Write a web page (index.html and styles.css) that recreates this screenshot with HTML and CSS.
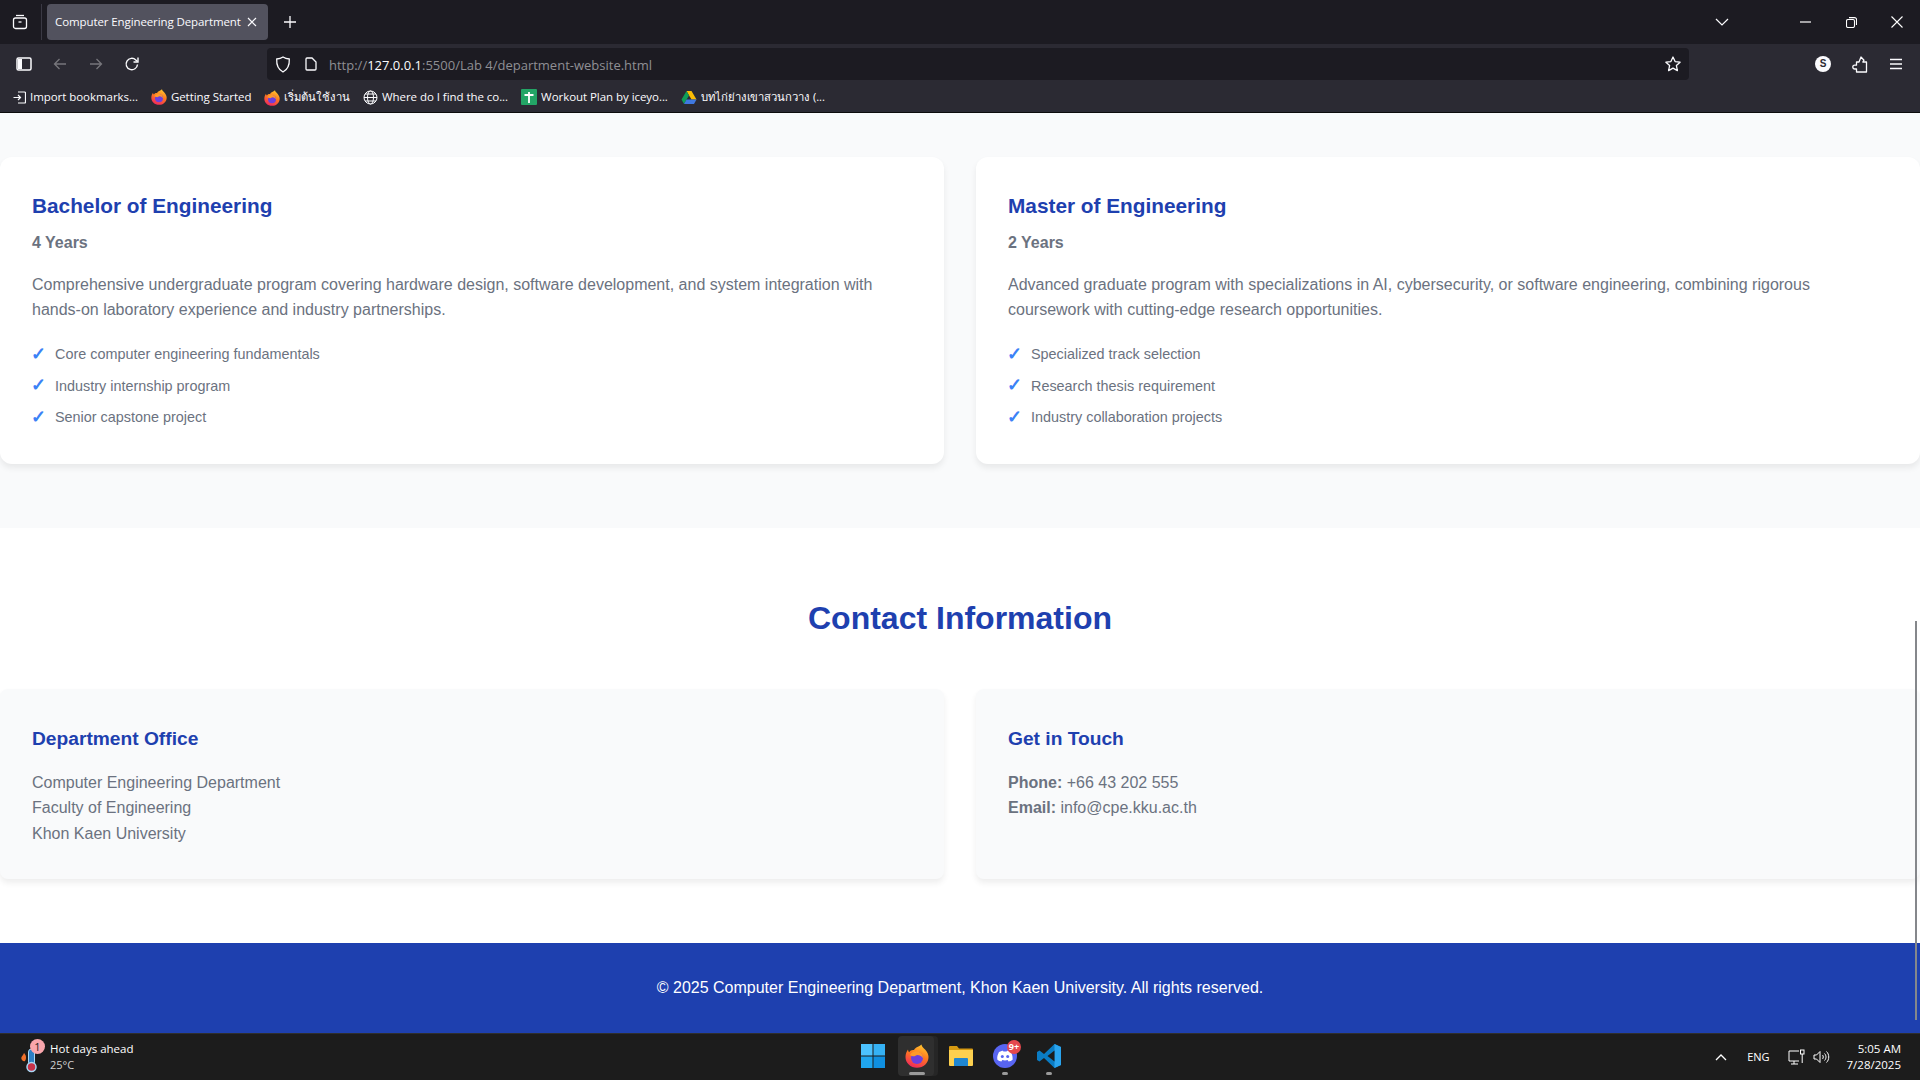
FILE: index.html
```html
<!DOCTYPE html>
<html>
<head>
  <title>Computer Engineering Department</title>
  <meta charset="utf-8" />
  <link rel="stylesheet" href="styles.css">
</head>
<body>
  <svg class="defs" width="0" height="0">
    <defs>
      <linearGradient id="fxg" x1="0.7" y1="0" x2="0.3" y2="1">
        <stop offset="0" stop-color="#ffc62e" />
        <stop offset="0.45" stop-color="#ff7a1f" />
        <stop offset="1" stop-color="#f0245f" />
      </linearGradient>
      <symbol id="fx" viewBox="0 0 24 24">
        <path d="M16.500 .5c.2 2.500 2 3.200 3.800 5.200C22.300 8 23.500 10.500 23.500 13c0 6-5 10.800-11.500 10.800S.5 18.800.5 13c0-2.800.9-5.300 2.500-7.500.1 1.300.5 2.200 1.200 2.800C5.200 6.400 7 5.600 9 6c1.500-3 5-3 7.500-5.500z" fill="url(#fxg)" />
        <circle cx="12" cy="14" r="6" fill="#6e3fdc" />
        <path d="M5 11c1.500-3 4.500-4.200 7.500-3.600 3.400.7 5.500 3.400 5.500 6.600 0 .5-1.700-3-5.500-3-1.500 0-1.700 1.200-3.200 1.200S5.600 12 5 11z" fill="#ff9a2a" />
      </symbol>
    </defs>
  </svg>

  <div class="browser-top">
    <div class="tabbar">
      <div class="tab-manager">
        <svg width="16" height="16" viewBox="0 0 16 16" fill="none" stroke="#fbfbfe" stroke-width="1.300"><rect x="1.500" y="4" width="13" height="10.500" rx="2" /><path d="M4 1.500h8" /><path d="M6.500 8h3" /></svg>
      </div>
      <div class="tab">
        <span class="tab-title">Computer Engineering Department</span>
        <svg width="10" height="10" viewBox="0 0 10 10" stroke="#fbfbfe" stroke-width="1.200"><path d="M1 1l8 8M9 1l-8 8" /></svg>
      </div>
      <div class="new-tab">
        <svg width="12" height="12" viewBox="0 0 12 12" stroke="#fbfbfe" stroke-width="1.300"><path d="M6 0v12M0 6h12" /></svg>
      </div>
      <div class="spacer"></div>
      <svg class="tab-list" width="14" height="8" viewBox="0 0 14 8" fill="none" stroke="#fbfbfe" stroke-width="1.200"><path d="M1 1l6 6 6-6" /></svg>
      <div class="win-btn">
        <svg width="11" height="2" viewBox="0 0 11 2" stroke="#fff" stroke-width="1.200"><path d="M0 1h11" /></svg>
      </div>
      <div class="win-btn">
        <svg width="11" height="11" viewBox="0 0 11 11" fill="none" stroke="#fff" stroke-width="1.100"><rect x="0.500" y="2.500" width="8" height="8" rx="1.500" /><path d="M3 .6h5.500a2 2 0 0 1 2 2V8" /></svg>
      </div>
      <div class="win-btn">
        <svg width="12" height="12" viewBox="0 0 12 12" stroke="#fff" stroke-width="1.100"><path d="M.5.500l11 11M11.500.500l-11 11" /></svg>
      </div>
    </div>

    <div class="navbar">
      <div class="nav-btn">
        <svg width="16" height="14" viewBox="0 0 16 14" fill="none" stroke="#fbfbfe" stroke-width="1.500"><rect x="1" y="1" width="14" height="12" rx="1.500" /><rect x="2" y="2" width="4" height="10" fill="#fbfbfe" stroke="none" /></svg>
      </div>
      <div class="nav-btn">
        <svg width="14" height="14" viewBox="0 0 14 14" fill="none" stroke="#77767c" stroke-width="1.300"><path d="M13 7H1.500M6.500 2l-5 5 5 5" /></svg>
      </div>
      <div class="nav-btn">
        <svg width="14" height="14" viewBox="0 0 14 14" fill="none" stroke="#77767c" stroke-width="1.300"><path d="M1 7h11.500M7.500 2l5 5-5 5" /></svg>
      </div>
      <div class="nav-btn">
        <svg width="16" height="16" viewBox="0 0 16 16" fill="none" stroke="#fbfbfe" stroke-width="1.400"><path d="M13.500 8.500a5.700 5.700 0 1 1-1.700-4.600l1.700 1.700" /><path d="M14 1.500v4.500H9.500" /></svg>
      </div>
      <div class="urlbar">
        <svg class="shield" width="16" height="17" viewBox="0 0 16 17" fill="none" stroke="#fbfbfe" stroke-width="1.300"><path d="M8 1c2 1.300 4 1.800 6.300 2 .3 6-1.500 10.500-6.300 13C3.200 13.500 1.400 9 1.700 3 4 2.800 6 2.300 8 1z" /></svg>
        <svg class="page-icon" width="12" height="14" viewBox="0 0 12 14" fill="none" stroke="#fbfbfe" stroke-width="1.300"><path d="M1 2a1 1 0 0 1 1-1h5l4 4v7a1 1 0 0 1-1 1H2a1 1 0 0 1-1-1z" /></svg>
        <span class="url"><span class="url-dim">http://</span>127.0.0.1<span class="url-dim">:5500/Lab 4/department-website.html</span></span>
        <div class="spacer"></div>
        <svg class="star" width="16" height="16" viewBox="0 0 16 16" fill="none" stroke="#fbfbfe" stroke-width="1.300" stroke-linejoin="round"><path d="M8 1l2.100 4.600 5 .6-3.700 3.400 1 5L8 12.100l-4.400 2.500 1-5L.9 6.200l5-.6z" /></svg>
      </div>
      <div class="nav-right">
        <div class="avatar">S</div>
        <svg width="16" height="17" viewBox="0 0 16 17" fill="none" stroke="#fbfbfe" stroke-width="1.300" stroke-linejoin="round"><path d="M9 1l3 3.200-1.200 1.800h3.700v10H4.500v-3H2.700a1.900 1.900 0 0 1 0-3.800h1.800V6H7z" /></svg>
        <svg width="14" height="12" viewBox="0 0 14 12" stroke="#fbfbfe" stroke-width="1.300"><path d="M1 1.500h12M1 6h12M1 10.500h12" /></svg>
      </div>
    </div>

    <div class="bookmarks">
      <div class="bookmark">
        <svg width="13" height="13" viewBox="0 0 13 13" fill="none" stroke="#fbfbfe" stroke-width="1.200"><path d="M5 1h6.500a1 1 0 0 1 1 1v9a1 1 0 0 1-1 1H5M.5 6.500h7M5 4l2.500 2.500L5 9" /></svg>
        <span>Import bookmarks...</span>
      </div>
      <div class="bookmark">
        <svg width="16" height="16"><use href="#fx" /></svg>
        <span>Getting Started</span>
      </div>
      <div class="bookmark">
        <svg width="16" height="16"><use href="#fx" /></svg>
        <span class="thai">เริ่มต้นใช้งาน</span>
      </div>
      <div class="bookmark">
        <svg width="15" height="15" viewBox="0 0 15 15" fill="none" stroke="#fbfbfe" stroke-width="1"><circle cx="7.500" cy="7.500" r="6.500" /><ellipse cx="7.500" cy="7.500" rx="3" ry="6.500" /><path d="M1 7.500h13M2 4h11M2 11h11" /></svg>
        <span>Where do I find the co...</span>
      </div>
      <div class="bookmark">
        <svg width="16" height="16" viewBox="0 0 16 16"><rect width="16" height="16" rx="1" fill="#23a566" /><path d="M8 3v11M3.500 6h9" stroke="#fff" stroke-width="1.800" /></svg>
        <span>Workout Plan by iceyo...</span>
      </div>
      <div class="bookmark">
        <svg width="16" height="15" viewBox="0 0 16 15"><path d="M5.500 1h5l5 8.500h-5z" fill="#fbbc04" /><path d="M5.500 1L.5 9.500 3 14l5-8.500z" fill="#0f9d58" /><path d="M3 14h10l2.500-4.500h-10z" fill="#3f78e0" /></svg>
        <span class="thai">บทไก่ย่างเขาสวนกวาง (...</span>
      </div>
    </div>
  </div>

  <div class="page">
    <section class="programs">
      <div class="two-col">
        <div class="program-card">
          <h3>Bachelor of Engineering</h3>
          <div class="duration">4 Years</div>
          <p>Comprehensive undergraduate program covering hardware design, software development, and system integration with hands-on laboratory experience and industry partnerships.</p>
          <ul>
            <li>Core computer engineering fundamentals</li>
            <li>Industry internship program</li>
            <li>Senior capstone project</li>
          </ul>
        </div>
        <div class="program-card">
          <h3>Master of Engineering</h3>
          <div class="duration">2 Years</div>
          <p>Advanced graduate program with specializations in AI, cybersecurity, or software engineering, combining rigorous coursework with cutting-edge research opportunities.</p>
          <ul>
            <li>Specialized track selection</li>
            <li>Research thesis requirement</li>
            <li>Industry collaboration projects</li>
          </ul>
        </div>
      </div>
    </section>

    <section class="contact">
      <h2>Contact Information</h2>
      <div class="two-col">
        <div class="contact-card">
          <h4>Department Office</h4>
          <p>Computer Engineering Department<br>Faculty of Engineering<br>Khon Kaen University</p>
        </div>
        <div class="contact-card">
          <h4>Get in Touch</h4>
          <p><strong>Phone:</strong> +66 43 202 555<br><strong>Email:</strong> info@cpe.kku.ac.th</p>
        </div>
      </div>
    </section>

    <footer class="site-footer">© 2025 Computer Engineering Department, Khon Kaen University. All rights reserved.</footer>
    <div class="scroll-thumb"></div>
  </div>

  <div class="taskbar">
    <div class="weather">
      <div class="weather-icon">
        <svg width="28" height="32" viewBox="0 0 28 32">
          <path d="M3 19c-2-3 1-4 2-7 2 2 3 5 1 8-1 .6-2 .2-3-1z" fill="#f0702a" />
          <rect x="9.500" y="8" width="6" height="16" rx="3" fill="#2d7fc4" stroke="#a9d8f5" stroke-width="1" />
          <circle cx="12.500" cy="26" r="4.500" fill="#c8324a" stroke="#a9d8f5" stroke-width="1.500" />
        </svg>
        <span class="weather-badge">1</span>
      </div>
      <div class="weather-text">
        <div>Hot days ahead</div>
        <div class="weather-temp">25°C</div>
      </div>
    </div>
    <div class="task-icons">
      <div class="task-icon">
        <svg width="24" height="24" viewBox="0 0 24 24"><rect width="11.500" height="11.500" fill="#4cc2ff" /><rect x="12.500" width="11.500" height="11.500" fill="#35b2f5" /><rect y="12.500" width="11.500" height="11.500" fill="#1fa5ee" /><rect x="12.500" y="12.500" width="11.500" height="11.500" fill="#0f8fe0" /></svg>
      </div>
      <div class="task-icon task-active">
        <svg width="24" height="24"><use href="#fx" /></svg>
        <span class="task-mark task-mark-wide"></span>
      </div>
      <div class="task-icon">
        <svg width="24" height="22" viewBox="0 0 24 22"><path d="M0 2a1 1 0 0 1 1-1h7l2 2.500h13a1 1 0 0 1 1 1V7H0z" fill="#d69a12" /><path d="M0 5h24v15a1 1 0 0 1-1 1H1a1 1 0 0 1-1-1z" fill="#fcd04f" /><path d="M5 14a1 1 0 0 1 1-1h12a1 1 0 0 1 1 1v7H5z" fill="#1f86d0" /></svg>
      </div>
      <div class="task-icon">
        <svg width="24" height="24" viewBox="0 0 24 24"><circle cx="12" cy="12" r="12" fill="#5865f2" /><path d="M6 8c2-1 3.500-1.300 4-1.300l.4.800h3.200l.4-.8c.5 0 2 .3 4 1.300 1.300 2.500 1.800 5 1.600 7.800-1.400 1-2.800 1.500-4 1.700l-.8-1.300-.1-.1c-1.700.6-3.700.6-5.400 0l-.9 1.400c-1.200-.2-2.600-.7-4-1.700C3.800 13 4.700 10.500 6 8z" fill="#fff" /><circle cx="9.300" cy="12.500" r="1.500" fill="#5865f2" /><circle cx="14.700" cy="12.500" r="1.500" fill="#5865f2" /></svg>
        <span class="chat-badge">9+</span>
        <span class="task-mark"></span>
      </div>
      <div class="task-icon">
        <svg width="24" height="24" viewBox="0 0 24 24"><path d="M17.500 0L24 3v18l-6.500 3L7 14l-4.500 3.500L0 16V8l2.500-1.500L7 10z" fill="#0a7cc4" /><path d="M17.500 0L24 3v18l-6.500 3z" fill="#2aa4ee" /><path d="M17.500 6.500L10.500 12l7 5.500z" fill="#1c1c1c" /></svg>
        <span class="task-mark"></span>
      </div>
    </div>
    <div class="tray">
      <svg width="12" height="7" viewBox="0 0 12 7" fill="none" stroke="#fff" stroke-width="1.300"><path d="M1 6l5-5 5 5" /></svg>
      <span class="tray-lang">ENG</span>
      <svg class="tray-net" width="17" height="16" viewBox="0 0 17 16" fill="none" stroke="#fff" stroke-width="1"><path d="M11 2H1v10h10M6 12v3M3 15h7" /><rect x="12.500" y="1" width="3.500" height="4" /><path d="M14.200 5v9" /></svg>
      <svg class="tray-vol" width="17" height="14" viewBox="0 0 17 14" fill="none" stroke="#fff" stroke-width="1"><path d="M1 5h2.500L7 1.500v11L3.500 9H1zM9.500 5c1 1 1 3 0 4M11.500 3.500c2 2 2 5 0 7M13.500 1.500c3 3 3 8 0 11" /></svg>
      <div class="clock">
        <div>5:05 AM</div>
        <div>7/28/2025</div>
      </div>
    </div>
  </div>
</body>
</html>
```

FILE: styles.css
```css
* {
  box-sizing: border-box;
}

html,
body {
  height: 100%;
}

body {
  display: flex;
  flex-direction: column;
  height: 1080px;
  margin: 0;
  padding: 0;
  overflow: hidden;
  font-family: "Liberation Sans", Arial, sans-serif;
  line-height: 1.6;
  color: #6b7280;
  background: #fff;
}

.defs {
  position: absolute;
}

.spacer {
  flex: 1;
}

/* browser chrome */
.browser-top {
  flex: none;
  height: 113px;
  font-family: "Open Sans", "Noto Sans", sans-serif;
  color: #fbfbfe;
  background: #2b2a33;
  border-bottom: 1px solid #0c0c0d;
}

.tabbar {
  display: flex;
  align-items: center;
  height: 44px;
  background: #1c1b22;
}

.tab-manager {
  display: flex;
  align-items: center;
  justify-content: center;
  width: 42px;
  height: 36px;
  padding-right: 2px;
  border-right: 1px solid #3a3944;
}

.tab {
  display: flex;
  align-items: center;
  justify-content: space-between;
  width: 221px;
  height: 36px;
  margin-left: 5px;
  padding: 0 11px 0 8px;
  font-size: 11.5px;
  letter-spacing: -0.1px;
  white-space: nowrap;
  background: #52525e;
  border-radius: 4px;
}

.tab-title {
  width: 188px;
  overflow: hidden;
}

.new-tab {
  display: flex;
  justify-content: center;
  width: 44px;
}

.tab-list {
  margin-right: 53px;
}

.win-btn {
  display: flex;
  align-items: center;
  justify-content: center;
  width: 46px;
  height: 44px;
}

.navbar {
  display: flex;
  align-items: center;
  height: 36px;
  padding-top: 4px;
  padding-left: 6px;
}

.nav-btn {
  display: flex;
  align-items: center;
  justify-content: center;
  width: 36px;
  height: 32px;
}

.urlbar {
  display: flex;
  align-items: center;
  width: 1422px;
  height: 32px;
  margin-left: 117px;
  padding: 0 8px;
  background: #1c1b22;
  border-radius: 4px;
}

.page-icon {
  margin-left: 14px;
}

.url {
  margin-left: 12px;
  padding-top: 2px;
  font-size: 13px;
  color: #fbfbfe;
}

.url-dim {
  color: #8f8f94;
}

.nav-right {
  display: flex;
  align-items: center;
  gap: 21px;
  margin-left: 126px;
}

.avatar {
  width: 16px;
  height: 16px;
  font: bold 10px/16px "Liberation Sans", sans-serif;
  text-align: center;
  color: #2b2a33;
  background: #fbfbfe;
  border-radius: 50%;
}

.bookmarks {
  display: flex;
  align-items: center;
  gap: 13px;
  height: 32px;
  padding-top: 3px;
  padding-left: 13px;
  font-size: 11.5px;
  letter-spacing: -0.05px;
  white-space: nowrap;
}

.bookmark {
  display: flex;
  align-items: center;
  gap: 4px;
}

.thai {
  font-size: 11.3px;
}

/* page content */
.page {
  position: relative;
  flex: none;
  height: 920px;
  overflow: hidden;
}

.programs {
  height: 415px;
  padding-top: 44px;
  background: #f9fafb;
}

.two-col {
  display: grid;
  grid-template-columns: 1fr 1fr;
  gap: 32px;
}

.program-card {
  padding: 32px 32px 31px;
  background: #fff;
  border-radius: 12px;
  box-shadow: 0 4px 6px rgba(0, 0, 0, 0.07);
}

.program-card h3 {
  margin: 0 0 8px;
  font-size: 20.8px;
  color: #1e40af;
}

.duration {
  margin-bottom: 16px;
  font-weight: bold;
}

.program-card p {
  margin: 0 0 16px;
}

.program-card ul {
  margin: 0;
  padding: 0;
  list-style: none;
}

.program-card li {
  position: relative;
  padding: 4.2px 0 4.2px 23px;
  font-size: 14.4px;
}

.program-card li::before {
  content: "✓";
  position: absolute;
  top: 1px;
  left: -1px;
  font-size: 18px;
  font-weight: bold;
  line-height: 28px;
  color: #3b82f6;
}

.contact {
  height: 415px;
  padding-top: 65px;
}

.contact h2 {
  margin: 0 0 45px;
  font-size: 32px;
  text-align: center;
  color: #1e40af;
}

.contact-card {
  height: 190px;
  padding: 32px;
  background: #f9fafb;
  border-radius: 8px;
  box-shadow: 0 4px 6px rgba(0, 0, 0, 0.07);
}

.contact-card h4 {
  margin: 0 0 14px;
  padding-top: 2px;
  font-size: 19.2px;
  line-height: 1.7;
  color: #1e40af;
}

.contact-card p {
  margin: 0;
}

.site-footer {
  height: 90px;
  padding: 32px;
  text-align: center;
  color: #fff;
  background: #1e40af;
}

.scroll-thumb {
  position: absolute;
  top: 508px;
  right: 3px;
  width: 2px;
  height: 399px;
  background: #85878b;
}

/* windows taskbar */
.taskbar {
  position: relative;
  flex: none;
  display: flex;
  align-items: center;
  justify-content: space-between;
  height: 47px;
  font-family: "Open Sans", "Noto Sans", sans-serif;
  color: #fff;
  background: #1c1c1c;
  border-top: 1px solid #2e2e2e;
}

.weather {
  display: flex;
  align-items: center;
  gap: 7px;
  padding-left: 19px;
  font-size: 11.5px;
  line-height: 16px;
}

.weather-icon {
  position: relative;
  width: 24px;
  height: 32px;
}

.weather-badge {
  position: absolute;
  top: -2px;
  left: 11px;
  width: 15px;
  height: 15px;
  font-size: 11px;
  line-height: 15px;
  text-align: center;
  color: #222;
  background: #f9a6ac;
  border-radius: 50%;
}

.weather-temp {
  font-size: 11px;
  color: #d0d0d0;
}

.task-icons {
  position: absolute;
  left: 851px;
  top: 0;
  display: flex;
}

.task-icon {
  position: relative;
  display: flex;
  align-items: center;
  justify-content: center;
  width: 44px;
  height: 44px;
}

.task-icon svg {
  position: relative;
}

.task-active::before {
  content: "";
  position: absolute;
  top: 2px;
  bottom: 2px;
  left: 3px;
  right: 5px;
  background: #2f2f2f;
  border-radius: 4px;
  box-shadow: 4px 0 0 #262626;
}

.task-mark {
  position: absolute;
  bottom: 3px;
  left: 19px;
  width: 6px;
  height: 3px;
  background: #9a9a9a;
  border-radius: 2px;
}

.task-mark-wide {
  left: 14px;
  width: 16px;
}

.chat-badge {
  position: absolute;
  top: 6px;
  right: 6px;
  width: 14px;
  height: 14px;
  font-size: 9px;
  font-weight: bold;
  line-height: 14px;
  text-align: center;
  color: #fff;
  background: #e5484d;
  border-radius: 50%;
}

.tray {
  display: flex;
  align-items: center;
  padding-right: 19px;
  font-size: 11.5px;
}

.tray-lang {
  margin-left: 20px;
  font-size: 11px;
}

.tray-net {
  margin-left: 18px;
}

.tray-vol {
  margin-left: 8px;
}

.clock {
  margin-left: 17px;
  line-height: 16px;
  text-align: right;
}
```
